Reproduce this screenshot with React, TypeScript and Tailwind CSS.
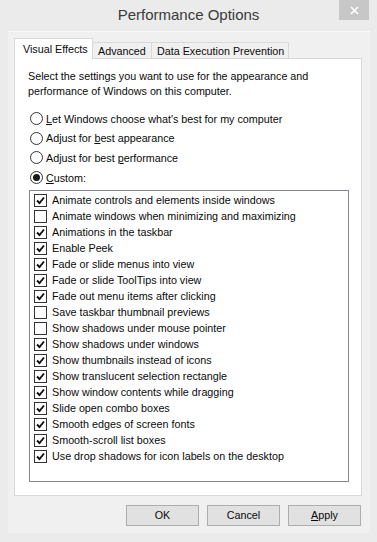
import React from "react";

const effects: { label: string; checked: boolean }[] = [
  { label: "Animate controls and elements inside windows", checked: true },
  { label: "Animate windows when minimizing and maximizing", checked: false },
  { label: "Animations in the taskbar", checked: true },
  { label: "Enable Peek", checked: true },
  { label: "Fade or slide menus into view", checked: true },
  { label: "Fade or slide ToolTips into view", checked: true },
  { label: "Fade out menu items after clicking", checked: true },
  { label: "Save taskbar thumbnail previews", checked: false },
  { label: "Show shadows under mouse pointer", checked: false },
  { label: "Show shadows under windows", checked: true },
  { label: "Show thumbnails instead of icons", checked: true },
  { label: "Show translucent selection rectangle", checked: true },
  { label: "Show window contents while dragging", checked: true },
  { label: "Slide open combo boxes", checked: true },
  { label: "Smooth edges of screen fonts", checked: true },
  { label: "Smooth-scroll list boxes", checked: true },
  { label: "Use drop shadows for icon labels on the desktop", checked: true },
];

function Radio({ selected, children }: { selected?: boolean; children: React.ReactNode }) {
  return (
    <div className="flex items-center h-[19.6px] pl-[15px]">
      <span className="w-[13px] h-[13px] rounded-full border border-[#333333] bg-white flex items-center justify-center shrink-0">
        {selected && <span className="w-[7px] h-[7px] rounded-full bg-[#1a1a1a]" />}
      </span>
      <span className="ml-[3px] whitespace-nowrap">{children}</span>
    </div>
  );
}

function CheckRow({ label, checked }: { label: string; checked: boolean }) {
  return (
    <div className="flex items-center h-[16px] pl-[4px]">
      <span className="w-[13px] h-[13px] border border-[#333333] bg-white flex items-center justify-center shrink-0">
        {checked && (
          <svg width="9" height="9" viewBox="0 0 9 9">
            <path d="M1 4.5 L3.5 7 L8 1.5" fill="none" stroke="#111" strokeWidth="1.9" />
          </svg>
        )}
      </span>
      <span className="ml-[5px] whitespace-nowrap">{label}</span>
    </div>
  );
}

function Button({ children }: { children: React.ReactNode }) {
  return (
    <div className="w-[73px] h-[21px] border border-[#adadad] bg-[#e1e1e1] flex items-center justify-center">
      {children}
    </div>
  );
}

export default function App() {
  return (
    <div
      className="w-[377px] h-[542px] bg-[#ebebeb] flex flex-col text-[10.75px] text-[#0a0a0a] overflow-hidden"
      style={{ fontFamily: '"Liberation Sans", Arial, sans-serif' }}
    >
      {/* Title bar */}
      <div className="relative h-[31px] flex items-center justify-center shrink-0">
        <span className="text-[15px] text-[#3a3a3a] pb-[1px]">Performance Options</span>
        <div className="absolute right-[8px] top-0 w-[30px] h-[20px] bg-[#c7c7c7] flex items-center justify-center">
          <svg width="9" height="9" viewBox="0 0 9 9">
            <path d="M1 1 L8 8 M8 1 L1 8" stroke="#ffffff" strokeWidth="1.6" />
          </svg>
        </div>
      </div>

      {/* Client area */}
      <div className="ml-[8px] mr-[7px] h-[502px] bg-[#f0f0f0] border-t border-[#fafafa] flex flex-col pt-[6px] pl-[6px] pr-[8px]">
        {/* Tabs */}
        <div className="flex items-end h-[21px] relative z-10 whitespace-nowrap">
          <div className="h-[21px] w-[79px] bg-white border border-[#d9d9d9] border-b-0 pl-[8px] pt-[3px] leading-[14px]">
            Visual Effects
          </div>
          <div className="h-[17px] w-[60px] -ml-px bg-[#f0f0f0] border border-[#d9d9d9] pl-[5px] pt-[1px] leading-[14px]">
            Advanced
          </div>
          <div className="h-[17px] w-[138px] -ml-px bg-[#f0f0f0] border border-[#d9d9d9] pl-[5px] pt-[1px] leading-[14px]">
            Data Execution Prevention
          </div>
        </div>

        {/* Tab page */}
        <div className="-mt-px h-[438px] bg-white border border-[#d9d9d9] flex flex-col pl-[13px]">
          <p className="pt-[10px] leading-[15px] whitespace-nowrap">
            Select the settings you want to use for the appearance and
            <br />
            performance of Windows on this computer.
          </p>
          <div className="mt-[10px] -ml-[13px] flex flex-col">
            <Radio>
              <span className="underline">L</span>et Windows choose what's best for my computer
            </Radio>
            <Radio>
              Adjust for <span className="underline">b</span>est appearance
            </Radio>
            <Radio>
              Adjust for best <span className="underline">p</span>erformance
            </Radio>
            <Radio selected>
              <span className="underline">C</span>ustom:
            </Radio>
          </div>
          <div className="mt-[3px] ml-[1px] w-[320px] h-[292px] border border-[#828790] pt-[1px]">
            {effects.map((e) => (
              <CheckRow key={e.label} label={e.label} checked={e.checked} />
            ))}
          </div>
        </div>

        {/* Buttons */}
        <div className="mt-[9px] flex justify-end gap-[8px] pr-px">
          <Button>OK</Button>
          <Button>Cancel</Button>
          <Button>
            <span>
              <span className="underline">A</span>pply
            </span>
          </Button>
        </div>
      </div>
    </div>
  );
}
